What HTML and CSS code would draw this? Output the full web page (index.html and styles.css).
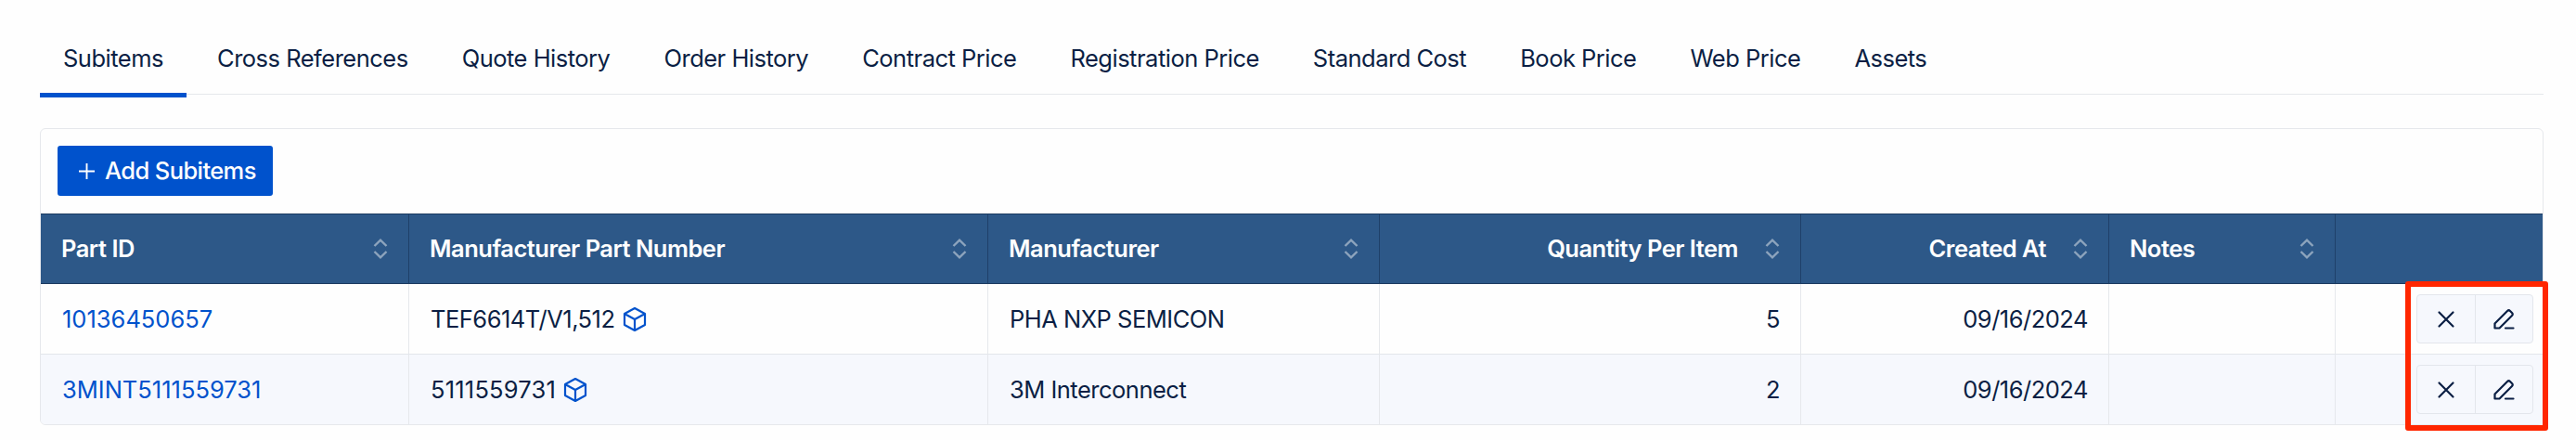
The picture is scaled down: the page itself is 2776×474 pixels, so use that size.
FILE: index.html
```html
<!DOCTYPE html>
<html lang="en">
  <head>
    <meta charset="UTF-8" />
    <meta name="viewport" content="width=device-width, initial-scale=1.0" />
    <title>Subitems</title>
    <link rel="stylesheet" href="styles.css">
  </head>
  <body>
    <svg class="sprite">
      <symbol id="sort" viewBox="0 0 16 22">
        <path d="M1.5 8 8 1.7 14.5 8M1.5 14 8 20.3 14.5 14" />
      </symbol>
      <symbol id="cube" viewBox="0 0 26 28">
        <path d="M13 2 24 8v12L13 26 2 20V8zM2 8l11 6 11-6M13 14v12" />
      </symbol>
      <symbol id="close" viewBox="0 0 24 24">
        <path d="M4.500 4.500l15 15M19.500 4.500l-15 15" />
      </symbol>
      <symbol id="pencil" viewBox="0 0 24 24">
        <path d="M2.5 21.5v-5L16 3Q17.5 1.5 19 3l2 2Q22.500 6.500 21 8L7.500 21.500zM14 21.500h8.500" />
      </symbol>
    </svg>

    <nav class="tabs">
      <a class="tab active">Subitems</a>
      <a class="tab">Cross References</a>
      <a class="tab">Quote History</a>
      <a class="tab">Order History</a>
      <a class="tab">Contract Price</a>
      <a class="tab">Registration Price</a>
      <a class="tab">Standard Cost</a>
      <a class="tab">Book Price</a>
      <a class="tab">Web Price</a>
      <a class="tab">Assets</a>
    </nav>

    <div class="card">
      <div class="toolbar">
        <button class="btn-add">
          <svg class="plus" viewBox="0 0 18 18"><path d="M9 0v18M0 9h18" /></svg>
          <span>Add Subitems</span>
        </button>
      </div>
      <table>
        <colgroup>
          <col class="col-part">
          <col class="col-mpn">
          <col class="col-mfr">
          <col class="col-qty">
          <col class="col-created">
          <col class="col-notes">
          <col class="col-actions">
        </colgroup>
        <thead>
          <tr>
            <th><div class="head"><span>Part ID</span><svg class="sort"><use href="#sort" /></svg></div></th>
            <th><div class="head"><span>Manufacturer Part Number</span><svg class="sort"><use href="#sort" /></svg></div></th>
            <th><div class="head"><span>Manufacturer</span><svg class="sort"><use href="#sort" /></svg></div></th>
            <th><div class="head right"><span>Quantity Per Item</span><svg class="sort"><use href="#sort" /></svg></div></th>
            <th><div class="head right"><span>Created At</span><svg class="sort"><use href="#sort" /></svg></div></th>
            <th><div class="head"><span>Notes</span><svg class="sort"><use href="#sort" /></svg></div></th>
            <th></th>
          </tr>
        </thead>
        <tbody>
          <tr>
            <td><a class="link">10136450657</a></td>
            <td><div class="mpn"><span>TEF6614T/V1,512</span><svg class="cube"><use href="#cube" /></svg></div></td>
            <td>PHA NXP SEMICON</td>
            <td class="num">5</td>
            <td class="num">09/16/2024</td>
            <td></td>
            <td class="actions">
              <div class="btn-group">
                <button><svg class="icon"><use href="#close" /></svg></button>
                <button><svg class="icon"><use href="#pencil" /></svg></button>
              </div>
            </td>
          </tr>
          <tr>
            <td><a class="link">3MINT5111559731</a></td>
            <td><div class="mpn"><span class="digits">5111559731</span><svg class="cube"><use href="#cube" /></svg></div></td>
            <td>3M Interconnect</td>
            <td class="num">2</td>
            <td class="num">09/16/2024</td>
            <td></td>
            <td class="actions">
              <div class="btn-group">
                <button><svg class="icon"><use href="#close" /></svg></button>
                <button><svg class="icon"><use href="#pencil" /></svg></button>
              </div>
            </td>
          </tr>
        </tbody>
      </table>
      <div class="highlight"></div>
    </div>
  </body>
</html>
```

FILE: styles.css
```css
* {
  box-sizing: border-box;
}
body {
  margin: 0;
  min-height: 474px;
  padding: 26px 35px 0 43px;
  background: #fefefe;
  color: #0b1f44;
  font-family: Inter, "Liberation Sans", sans-serif;
  font-size: 25.5px;
  line-height: 32px;
  letter-spacing: -0.5px;
}
svg {
  fill: none;
  stroke: currentColor;
  flex: none;
}
.sprite {
  display: none;
}
.tabs {
  display: flex;
  gap: 8px;
  height: 76px;
  border-bottom: 1px solid #e6e8ec;
}
.tab {
  height: 79px;
  padding: 21px 25px 0 25px;
  white-space: nowrap;
}
.tab.active {
  border-bottom: 5px solid #0052cc;
}
.card {
  position: relative;
  margin-top: 36px;
  border: 1px solid #e6e8ec;
  border-radius: 6px;
}
.toolbar {
  height: 91px;
  padding: 18px;
}
button {
  font: inherit;
  color: inherit;
  border: none;
}
.btn-add {
  display: flex;
  align-items: center;
  gap: 11px;
  width: 232px;
  height: 54px;
  padding: 0 0 0 23px;
  border-radius: 3px;
  background: #0052cc;
  color: #fff;
  font-weight: 500;
  letter-spacing: -0.6px;
  white-space: nowrap;
}
.plus {
  width: 17px;
  height: 17px;
  stroke-width: 2;
}
table {
  width: 100%;
  table-layout: fixed;
  border-collapse: separate;
  border-spacing: 0;
}
.col-part { width: 397px; }
.col-mpn { width: 624px; }
.col-mfr { width: 422px; }
.col-qty { width: 454px; }
.col-created { width: 332px; }
.col-notes { width: 244px; }
th {
  height: 76px;
  padding: 0 22px;
  background: #2d5888;
  border-top: 1px solid #1c3a60;
  border-bottom: 1px solid #1c3a60;
  border-right: 1px solid #1f4069;
  color: #fff;
  font-weight: 600;
  white-space: nowrap;
}
.head {
  display: flex;
  align-items: center;
  justify-content: space-between;
}
.head.right {
  justify-content: flex-end;
  gap: 29px;
}
.sort {
  width: 16px;
  height: 22px;
  stroke-width: 2.4;
  color: #8da4bd;
}
td {
  height: 76px;
  padding: 0 22px 0 23px;
  border-right: 1px solid #e6e8ec;
  border-bottom: 1px solid #e3e6eb;
}
th:last-child,
td:last-child {
  border-right: none;
}
tbody tr:nth-child(2) td {
  height: 75px;
  background: #f6f8fd;
  border-bottom: none;
}
tbody tr:last-child td:first-child {
  border-bottom-left-radius: 5px;
}
.link {
  color: #0052cc;
  letter-spacing: 0;
}
.mpn {
  display: flex;
  align-items: center;
  gap: 8px;
}
.digits {
  letter-spacing: 0.2px;
}
.cube {
  width: 26px;
  height: 28px;
  stroke-width: 2.2;
  stroke-linejoin: round;
  color: #0052cc;
}
.num {
  text-align: right;
}
.actions {
  padding: 0 10px 0 0;
}
.btn-group {
  display: flex;
  width: 126px;
  height: 53px;
  margin-left: auto;
  border: 1px solid #e3e6ec;
  border-radius: 4px;
  background: #f6f8fd;
}
.btn-group button {
  display: flex;
  flex: 1;
  align-items: center;
  justify-content: center;
  padding: 0;
  background: none;
}
.btn-group button + button {
  border-left: 1px solid #e3e6ec;
}
.icon {
  width: 24px;
  height: 24px;
  stroke-width: 2.2;
  stroke-linecap: round;
  stroke-linejoin: round;
}
.highlight {
  position: absolute;
  top: 164px;
  right: -6px;
  width: 154px;
  height: 161px;
  border: 6px solid #ff2600;
  border-radius: 3px;
}
```
